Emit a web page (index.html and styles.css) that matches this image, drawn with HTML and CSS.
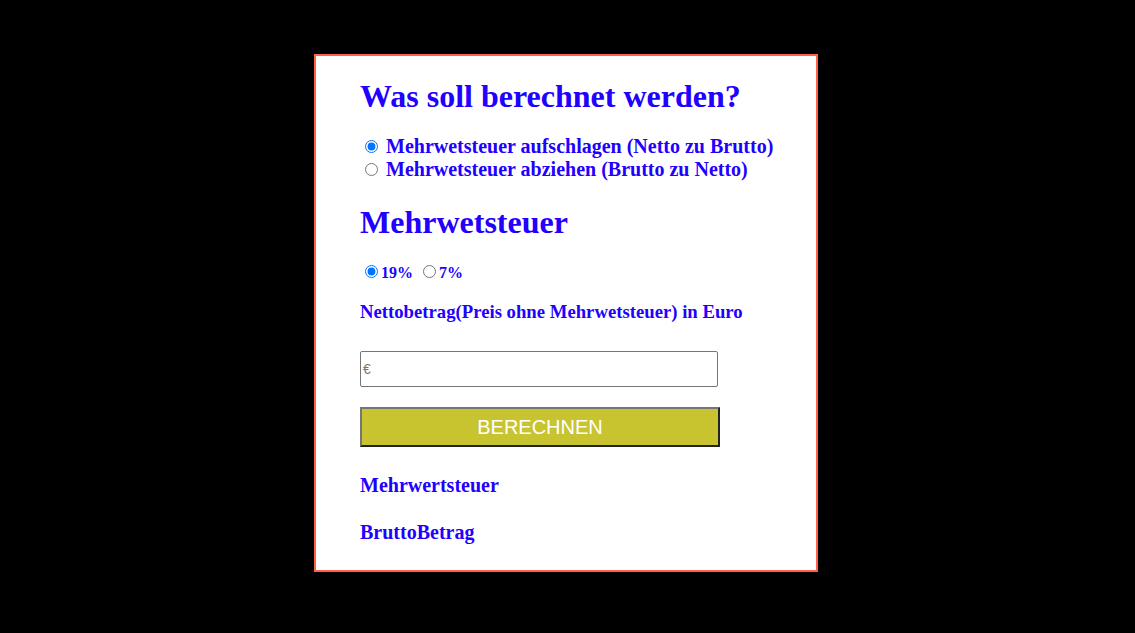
FILE: index.html
```html
<!DOCTYPE html>
<html lang="de">
<head>
<meta charset="utf-8">
<link rel="stylesheet" href="styles.css">
</head>
<body>
<div class="card">
  <h1 class="title">Was soll berechnet werden?</h1>
  <div class="choices">
    <label class="choice"><input type="radio" name="mode" checked> Mehrwetsteuer aufschlagen (Netto zu Brutto)</label>
    <label class="choice"><input type="radio" name="mode"> Mehrwetsteuer abziehen (Brutto zu Netto)</label>
  </div>
  <h1 class="title second">Mehrwetsteuer</h1>
  <div class="rates">
    <label class="rate"><input type="radio" name="rate" checked>19%</label>
    <label class="rate"><input type="radio" name="rate">7%</label>
  </div>
  <h3 class="field-label">Nettobetrag(Preis ohne Mehrwetsteuer) in Euro</h3>
  <input class="amount" type="text" placeholder="€">
  <button class="calc">BERECHNEN</button>
  <h3 class="result first">Mehrwertsteuer</h3>
  <h3 class="result">BruttoBetrag</h3>
</div>
</body>
</html>
```
FILE: styles.css
```css
html, body {
  margin: 0;
  padding: 0;
  background: #000;
}
body {
  font-family: "Liberation Serif", "Times New Roman", serif;
  padding-top: 54px;
  padding-right: 3px;
  display: flex;
  justify-content: center;
  align-items: flex-start;
}
.card {
  width: 456px;
  background: #fff;
  border: 2px solid #ff6347;
  padding: 22px 0 26px 44px;
  color: #2200ff;
  box-sizing: content-box;
}
.title {
  font-size: 32px;
  font-weight: bold;
  margin: 0;
  line-height: 37px;
}
.choices {
  margin-top: 20px;
  display: flex;
  flex-direction: column;
  padding-left: 4px;
}
.choice {
  font-size: 20px;
  font-weight: bold;
  line-height: 23px;
}
.choice input {
  margin: 0 3px 0 1px;
  width: 13px;
  height: 13px;
}
.second {
  margin-top: 23px;
}
.rates {
  margin-top: 23px;
  padding-left: 4px;
  display: flex;
  gap: 9px;
  font-size: 16px;
  font-weight: bold;
}
.rate input {
  margin: 0 3px 0 1px;
  width: 13px;
  height: 13px;
}
.field-label {
  font-size: 18.72px;
  margin: 19px 0 0;
}
.amount {
  display: block;
  margin-top: 28px;
  width: 358px;
  height: 36px;
  box-sizing: border-box;
  border: 1px solid #767676;
  border-radius: 2px;
  padding: 0 2px;
  font-family: "Liberation Sans", Arial, sans-serif;
  font-size: 14px;
}
.amount::placeholder {
  color: #757575;
}
.calc {
  display: block;
  margin-top: 20px;
  width: 360px;
  height: 40px;
  background: #c8c430;
  border: 2px solid;
  border-color: #767676 #222 #222 #767676;
  color: #fff;
  font-family: "Liberation Sans", Arial, sans-serif;
  font-size: 20px;
  padding: 0;
}
.result {
  font-size: 20px;
  margin: 24px 0 0;
}
.result.first {
  margin-top: 27px;
}
```
